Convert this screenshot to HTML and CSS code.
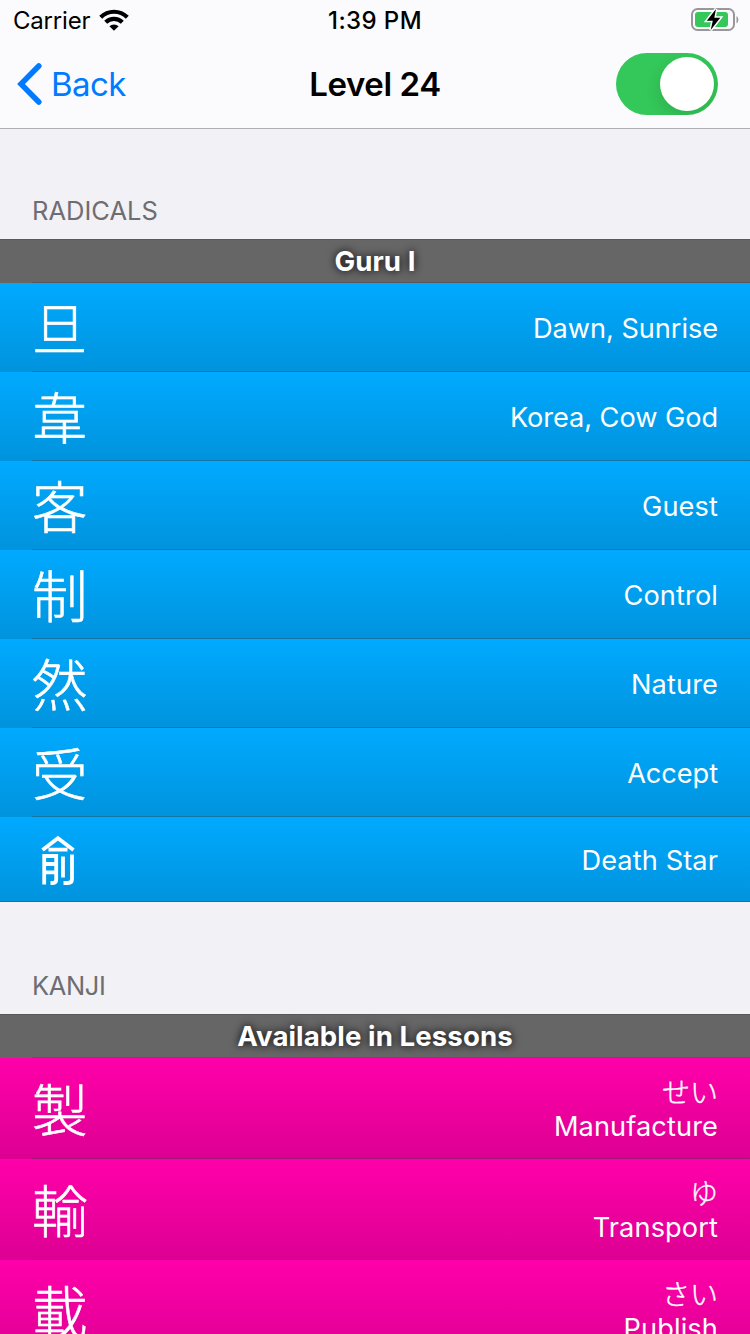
FILE: index.html
```html
<!DOCTYPE html>
<html lang="en">
<head>
<meta charset="utf-8">
<title>Level 24</title>
<link rel="stylesheet" href="styles.css">
</head>
<body>
<header class="top">
  <div class="status">
    <div class="carrier"><span class="status-text">Carrier</span>
      <svg class="wifi" width="30" height="22" viewBox="0 0 30 22"><g fill="none" stroke="#000" stroke-width="4.200"><path d="M1.700 8.200a19 19 0 0 1 26.600 0"/><path d="M6.700 13.300a11.800 11.800 0 0 1 16.600 0"/></g><path d="M15 21.700l-4.600-4.400a6.500 6.500 0 0 1 9.200 0z"/></svg>
    </div>
    <div class="status-text time">1:39 PM</div>
    <svg class="battery" width="48" height="24" viewBox="0 0 48 24"><rect x="1" y="1" width="42" height="21" rx="5.500" fill="none" stroke="#98989b" stroke-width="2"/><path d="M45.500 8v7.500c2.400-1.500 2.400-6 0-7.500z" fill="#98989b"/><rect x="4" y="4" width="33" height="15" rx="3" fill="#34c759"/><path d="M25 1L15.800 12.700h6L19.700 22l9.600-12.300h-6z" fill="#000" stroke="#fff" stroke-width="3" paint-order="stroke"/></svg>
  </div>
  <nav class="nav">
    <a class="back"><svg width="26" height="44" viewBox="0 0 26 44"><path d="M22.800 4L5 22l17.800 18" fill="none" stroke="#007aff" stroke-width="5.500" stroke-linecap="round"/></svg><span>Back</span></a>
    <h1 class="title">Level 24</h1>
    <div class="switch"><div class="knob"></div></div>
  </nav>
</header>
<main>
  <h2 class="section">RADICALS</h2>
  <div class="group"><span>Guru I</span></div>
  <ul class="list radicals">
    <li class="row"><span class="glyph" lang="ja">旦</span><span class="meaning tight">Dawn, Sunrise</span></li>
    <li class="row"><span class="glyph" lang="ja">韋</span><span class="meaning tight">Korea, Cow God</span></li>
    <li class="row"><span class="glyph" lang="ja">客</span><span class="meaning">Guest</span></li>
    <li class="row"><span class="glyph" lang="ja">制</span><span class="meaning">Control</span></li>
    <li class="row"><span class="glyph" lang="ja">然</span><span class="meaning">Nature</span></li>
    <li class="row"><span class="glyph" lang="ja">受</span><span class="meaning tight">Accept</span></li>
    <li class="row last"><svg class="radical" width="34" height="51" viewBox="0 0 34 51"><g fill="none" stroke="#fff" stroke-width="3.800"><path d="M1.500 16L16.900 4.200 32.500 16M7.500 15.700h19"/><path d="M3.200 50.500V22h12v23.500q0 3.500-3.300 3.500H9.500M3.200 30h12M3.200 38.300h12M22 22.500v21M31 20.500V45q0 4-4 4h-4.500"/></g></svg><span class="meaning">Death Star</span></li>
  </ul>
  <h2 class="section kanji-title">KANJI</h2>
  <div class="group"><span>Available in Lessons</span></div>
  <ul class="list kanji">
    <li class="row"><span class="glyph" lang="ja">製</span><span class="meaning"><span class="reading" lang="ja">せい</span>Manufacture</span></li>
    <li class="row"><span class="glyph" lang="ja">輸</span><span class="meaning"><span class="reading" lang="ja">ゆ</span>Transport</span></li>
    <li class="row"><span class="glyph" lang="ja">載</span><span class="meaning"><span class="reading" lang="ja">さい</span>Publish</span></li>
  </ul>
</main>
</body>
</html>
```
FILE: styles.css
```css
* { box-sizing: border-box; margin: 0; padding: 0; }
body {
  height: 1334px;
  overflow: hidden;
  background: #f2f1f6;
  font-family: Inter, "Noto Sans CJK JP", sans-serif;
}
.top { height: 129px; background: #fbfbfd; border-bottom: 1px solid #aeaeb3; }
.status {
  height: 40px;
  padding: 0 11px 0 13px;
  display: grid;
  grid-template-columns: 1fr auto 1fr;
  align-items: center;
  font-size: 24px;
}
.status-text { padding-top: 2px; line-height: 38px; }
.carrier { display: flex; align-items: center; gap: 9px; letter-spacing: -.2px; }
.wifi { display: block; }
.time { font-weight: 500; letter-spacing: .4px; margin-right: 2px; }
.battery { justify-self: end; }
.nav {
  height: 88px;
  padding: 0 16px;
  display: grid;
  grid-template-columns: 1fr auto 1fr;
  align-items: center;
}
.back { display: flex; align-items: center; gap: 9px; color: #007aff; font-size: 33px; letter-spacing: -.6px; }
.title { font-size: 33px; font-weight: 600; letter-spacing: -.4px; }
.switch {
  justify-self: end;
  width: 102px;
  height: 62px;
  margin-right: 16px;
  padding: 4px;
  display: flex;
  justify-content: flex-end;
  border-radius: 31px;
  background: #34c759;
  overflow: hidden;
}
.knob {
  width: 54px;
  height: 54px;
  border-radius: 50%;
  background: #fff;
  box-shadow: 0 6px 16px rgba(0, 0, 0, .12);
}
.section {
  height: 110px;
  padding: 64px 0 0 32px;
  color: #6d6d72;
  font-size: 25.500px;
  line-height: 35px;
  font-weight: 400;
}
.kanji-title { height: 112px; padding-top: 66px; letter-spacing: -.4px; }
.group {
  height: 44px;
  border-top: 1px solid #58585a;
  background: linear-gradient(#58585a, #58585a) 32px 100% / 100% 1px no-repeat #666;
  color: #fff;
  font-size: 27.600px;
  font-weight: 700;
  letter-spacing: .1px;
  line-height: 43px;
  text-align: center;
  text-shadow: 0 0 8px #000;
}
.list { list-style: none; }
.row {
  position: relative;
  display: flex;
  align-items: center;
  justify-content: space-between;
  padding: 0 32px;
  color: #fff;
}
.row::after {
  content: "";
  position: absolute;
  left: 32px;
  right: 0;
  bottom: 0;
  height: 1px;
  background: rgba(60, 60, 67, .36);
}
.radicals .row { height: 89px; background: linear-gradient(#00aaff, #0093dd); }
.radicals .last { height: 85px; }
.row.last::after { left: 0; }
.kanji .row { height: 101px; background: linear-gradient(#ff00aa, #dd0093); }
.glyph {
  font-family: "Noto Sans CJK JP", sans-serif;
  font-size: 55.500px;
  font-weight: 300;
  line-height: 80px;
  margin-bottom: 4px;
  -webkit-text-stroke: .6px #fff;
}
.radical { margin-left: 9px; }
.meaning { padding-top: 2px; font-size: 27.200px; letter-spacing: .1px; line-height: 34px; text-align: right; }
.meaning.tight { letter-spacing: -.06px; }
.reading {
  display: block;
  height: 34px;
  font-family: "Noto Sans CJK JP", sans-serif;
  font-weight: 300;
  font-size: 28px;
  letter-spacing: 0;
  line-height: 30px;
  -webkit-text-stroke: .4px #fff;
}
```
